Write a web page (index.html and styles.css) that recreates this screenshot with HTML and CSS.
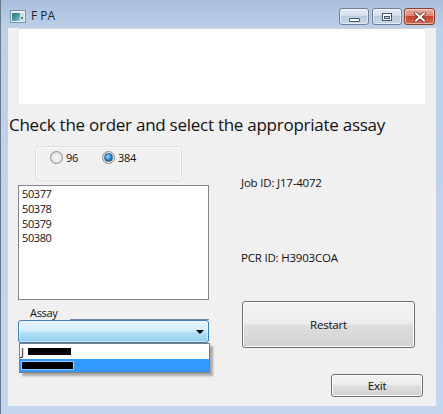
FILE: index.html
```html
<!DOCTYPE html>
<html>
<head>
<meta charset="utf-8">
<title>F PA</title>
<link rel="stylesheet" href="styles.css">
</head>
<body>
<div class="window">
  <div class="titlebar">
    <svg class="app-icon" width="16" height="13" viewBox="0 0 16 13">
      <defs>
        <linearGradient id="ig" x1="0" y1="0" x2="1" y2="1">
          <stop offset="0" stop-color="#2a7a5c"/>
          <stop offset="0.6" stop-color="#4d9fb4"/>
          <stop offset="1" stop-color="#a9d2e6"/>
        </linearGradient>
      </defs>
      <rect x="0.5" y="0.5" width="15" height="12" fill="#e6edf4" stroke="#7d93ad"/>
      <rect x="2" y="3" width="8" height="8" fill="url(#ig)"/>
      <rect x="10" y="3" width="4" height="8" fill="#cfdbe6"/>
      <rect x="11" y="7" width="2" height="2" fill="#3c9a5a"/>
    </svg>
    <span class="title">F PA</span>
    <div class="caption">
      <div class="cbtn min"><span class="glyph-min"></span></div>
      <div class="cbtn max"><span class="glyph-max"></span></div>
      <div class="cbtn close">
        <svg width="12" height="10" viewBox="0 0 12 10">
          <path d="M2 1.5 L10 8.5 M10 1.5 L2 8.5" stroke="#5a2a22" stroke-width="3.6" stroke-linecap="square"/>
          <path d="M2 1.5 L10 8.5 M10 1.5 L2 8.5" stroke="#ffffff" stroke-width="2" stroke-linecap="square"/>
        </svg>
      </div>
    </div>
  </div>
  <div class="client">
    <div class="topbox"></div>
    <div class="heading">Check the order and select the appropriate assay</div>
    <div class="body">
      <div class="left">
        <div class="radio-group">
          <div class="radio r1"><span class="dot"></span><span>96</span></div>
          <div class="radio checked"><span class="dot"></span><span>384</span></div>
        </div>
        <div class="listbox">
          <div>50377</div>
          <div>50378</div>
          <div>50379</div>
          <div>50380</div>
        </div>
        <div class="assay">
          <div class="assay-head"><span class="assay-label">Assay</span><span class="assay-line"></span></div>
          <div class="combo">
            <span class="arrow"></span>
            <div class="dropdown">
              <div class="item"><span>J</span><span class="redact">0000000</span></div>
              <div class="item sel"><span class="redact r2">0000000000</span></div>
            </div>
          </div>
        </div>
      </div>
      <div class="right">
        <div class="info job">Job ID: J17-4072</div>
        <div class="info pcr">PCR ID: H3903COA</div>
        <div class="btn restart">Restart</div>
        <div class="btn exit">Exit</div>
      </div>
    </div>
  </div>
</div>
</body>
</html>
```
FILE: styles.css
```css
* { box-sizing: border-box; }
html, body { margin: 0; padding: 0; }
body {
  width: 443px;
  height: 414px;
  overflow: hidden;
  font-family: "Open Sans", "Noto Sans", sans-serif;
  color: #111;
  background: #c4d7ee;
}
.window {
  width: 443px;
  height: 414px;
  display: flex;
  flex-direction: column;
  background: linear-gradient(#a8bfdc 0, #bcd0e8 28px, #c3d6ee 100%);
  border-left: 1px solid #6b7888;
}
.titlebar {
  height: 28px;
  flex-shrink: 0;
  display: flex;
  align-items: flex-start;
}
.app-icon { margin: 10px 0 0 9px; flex-shrink: 0; }
.title {
  margin: 8px 0 0 5px;
  font-size: 12px;
  line-height: 16px;
  color: #1c2532;
}
.caption {
  margin: 8px 8px 0 auto;
  display: flex;
}
.cbtn {
  width: 30px;
  height: 17px;
  border: 1px solid #6f8197;
  border-radius: 3px;
  background: linear-gradient(#e6eef7 0, #d2deec 45%, #b9cbe0 50%, #c9d8ea 100%);
  box-shadow: inset 0 0 0 1px rgba(255,255,255,0.5);
  display: flex;
  align-items: center;
  justify-content: center;
}
.cbtn.max { margin-left: 3px; }
.cbtn.close {
  margin-left: 2px;
  width: 31px;
  border-color: #8b3b2f;
  background: linear-gradient(#eab0a2 0, #dc8570 45%, #c7452e 50%, #d6684f 100%);
}
.glyph-min {
  width: 11px;
  height: 4px;
  margin-top: 6px;
  background: #fff;
  border: 1px solid #44546a;
  border-radius: 1px;
}
.glyph-max {
  width: 10px;
  height: 8px;
  border: 1px solid #44546a;
  background: #fff;
  position: relative;
}
.glyph-max::after {
  content: "";
  position: absolute;
  left: 1px; top: 2px; right: 1px; bottom: 1px;
  border: 1px solid #44546a;
  background: #d4dfec;
}
.client {
  flex: 1;
  margin: 0 7px 8px 7px;
  background: #f0f0f0;
  display: flex;
  flex-direction: column;
}
.topbox {
  margin-left: 11px;
  width: 406px;
  height: 76px;
  background: #fff;
  border-top: 1px solid #d2d2d2;
  flex-shrink: 0;
}
.heading {
  margin: 9px 0 0 1px;
  font-size: 17px;
  line-height: 24px;
  letter-spacing: -0.26px;
  color: #111;
  white-space: nowrap;
}
.body {
  display: flex;
  padding-left: 10px;
}
.left {
  width: 191px;
  display: flex;
  flex-direction: column;
}
.radio-group {
  margin: 9px 0 0 17px;
  width: 147px;
  height: 35px;
  border: 1px solid #d5dfe5;
  border-radius: 3px;
  box-shadow: inset 0 0 0 1px #fafafa;
  padding: 4px 0 0 14px;
  display: flex;
  align-items: flex-start;
}
.radio {
  display: flex;
  align-items: center;
  font-size: 11px;
  line-height: 13px;
  letter-spacing: -0.3px;
}
.r1 { width: 52px; }
.dot {
  width: 13px;
  height: 13px;
  border-radius: 50%;
  border: 1px solid #8f9092;
  background: radial-gradient(circle at 50% 55%, #f7f7f7 0, #e6e6e6 55%, #c9c9c9 100%);
  margin-right: 3px;
  display: flex;
  align-items: center;
  justify-content: center;
}
.checked .dot::after {
  content: "";
  width: 7px;
  height: 7px;
  border-radius: 50%;
  background: radial-gradient(circle at 40% 35%, #9fdcfb 0, #2a83c9 55%, #0d4f8f 100%);
  border: 1px solid #1f5b8c;
}
.listbox {
  margin-top: 4px;
  height: 115px;
  border: 1px solid #828790;
  background: #fff;
  padding: 1px 3px;
  font-size: 11px;
  line-height: 14.8px;
  letter-spacing: -0.4px;
}
.assay { display: flex; flex-direction: column; }
.assay-head {
  height: 20px;
  display: flex;
  align-items: flex-end;
}
.assay-label {
  margin-left: 12px;
  font-size: 11px;
  line-height: 15px;
  letter-spacing: -0.3px;
}
.assay-line {
  flex: 1;
  height: 1px;
  margin-left: 12px;
  background: #6d8aa8;
}
.combo {
  position: relative;
  height: 23px;
  border: 1px solid #3c7fb1;
  border-radius: 3px;
  background: linear-gradient(#e6f5fd 0, #d5eefc 45%, #b4e0f8 55%, #93cdee 100%);
  box-shadow: inset 0 0 0 1px rgba(255,255,255,0.45);
}
.arrow {
  position: absolute;
  right: 4px;
  top: 9px;
  width: 0;
  height: 0;
  border-left: 4px solid transparent;
  border-right: 4px solid transparent;
  border-top: 4px solid #000;
}
.dropdown {
  position: absolute;
  top: 22px;
  left: 0;
  width: 191px;
  height: 30px;
  background: #fff;
  border: 1px solid #7d7d7d;
  box-shadow: 3px 3px 2px rgba(0,0,0,0.3);
  font-size: 11px;
  letter-spacing: -0.3px;
}
.item {
  height: 15px;
  line-height: 14px;
  padding-left: 1px;
  display: flex;
  align-items: center;
  white-space: nowrap;
  overflow: hidden;
}
.item.sel {
  height: 13px;
  background: #3399ff;
  color: #fff;
}
.redact {
  display: inline-block;
  width: 43px;
  height: 7px;
  background: #000;
  color: #000;
  font-size: 6px;
  line-height: 7px;
  overflow: hidden;
  margin-left: 4px;
}
.redact.r2 {
  width: 51px;
  margin-left: 1px;
  box-shadow: 0 0 0 1px rgba(255,255,255,0.5);
}
.right {
  margin-left: 32px;
  display: flex;
  flex-direction: column;
  align-items: flex-start;
}
.info {
  font-size: 11.5px;
  line-height: 15px;
  letter-spacing: -0.2px;
  white-space: nowrap;
}
.job { margin-top: 38px; }
.pcr { margin-top: 60px; }
.btn {
  border: 1px solid #707070;
  border-radius: 3px;
  background: linear-gradient(#f3f3f3 0, #ececec 48%, #dedede 52%, #d2d2d2 100%);
  box-shadow: inset 0 0 0 1px #fbfbfb;
  font-size: 11.5px;
  letter-spacing: -0.2px;
  display: flex;
  align-items: center;
  justify-content: center;
  color: #111;
}
.restart {
  margin: 36px 0 0 1px;
  width: 173px;
  height: 47px;
}
.exit {
  margin: 26px 0 0 90px;
  width: 92px;
  height: 23px;
}
```
